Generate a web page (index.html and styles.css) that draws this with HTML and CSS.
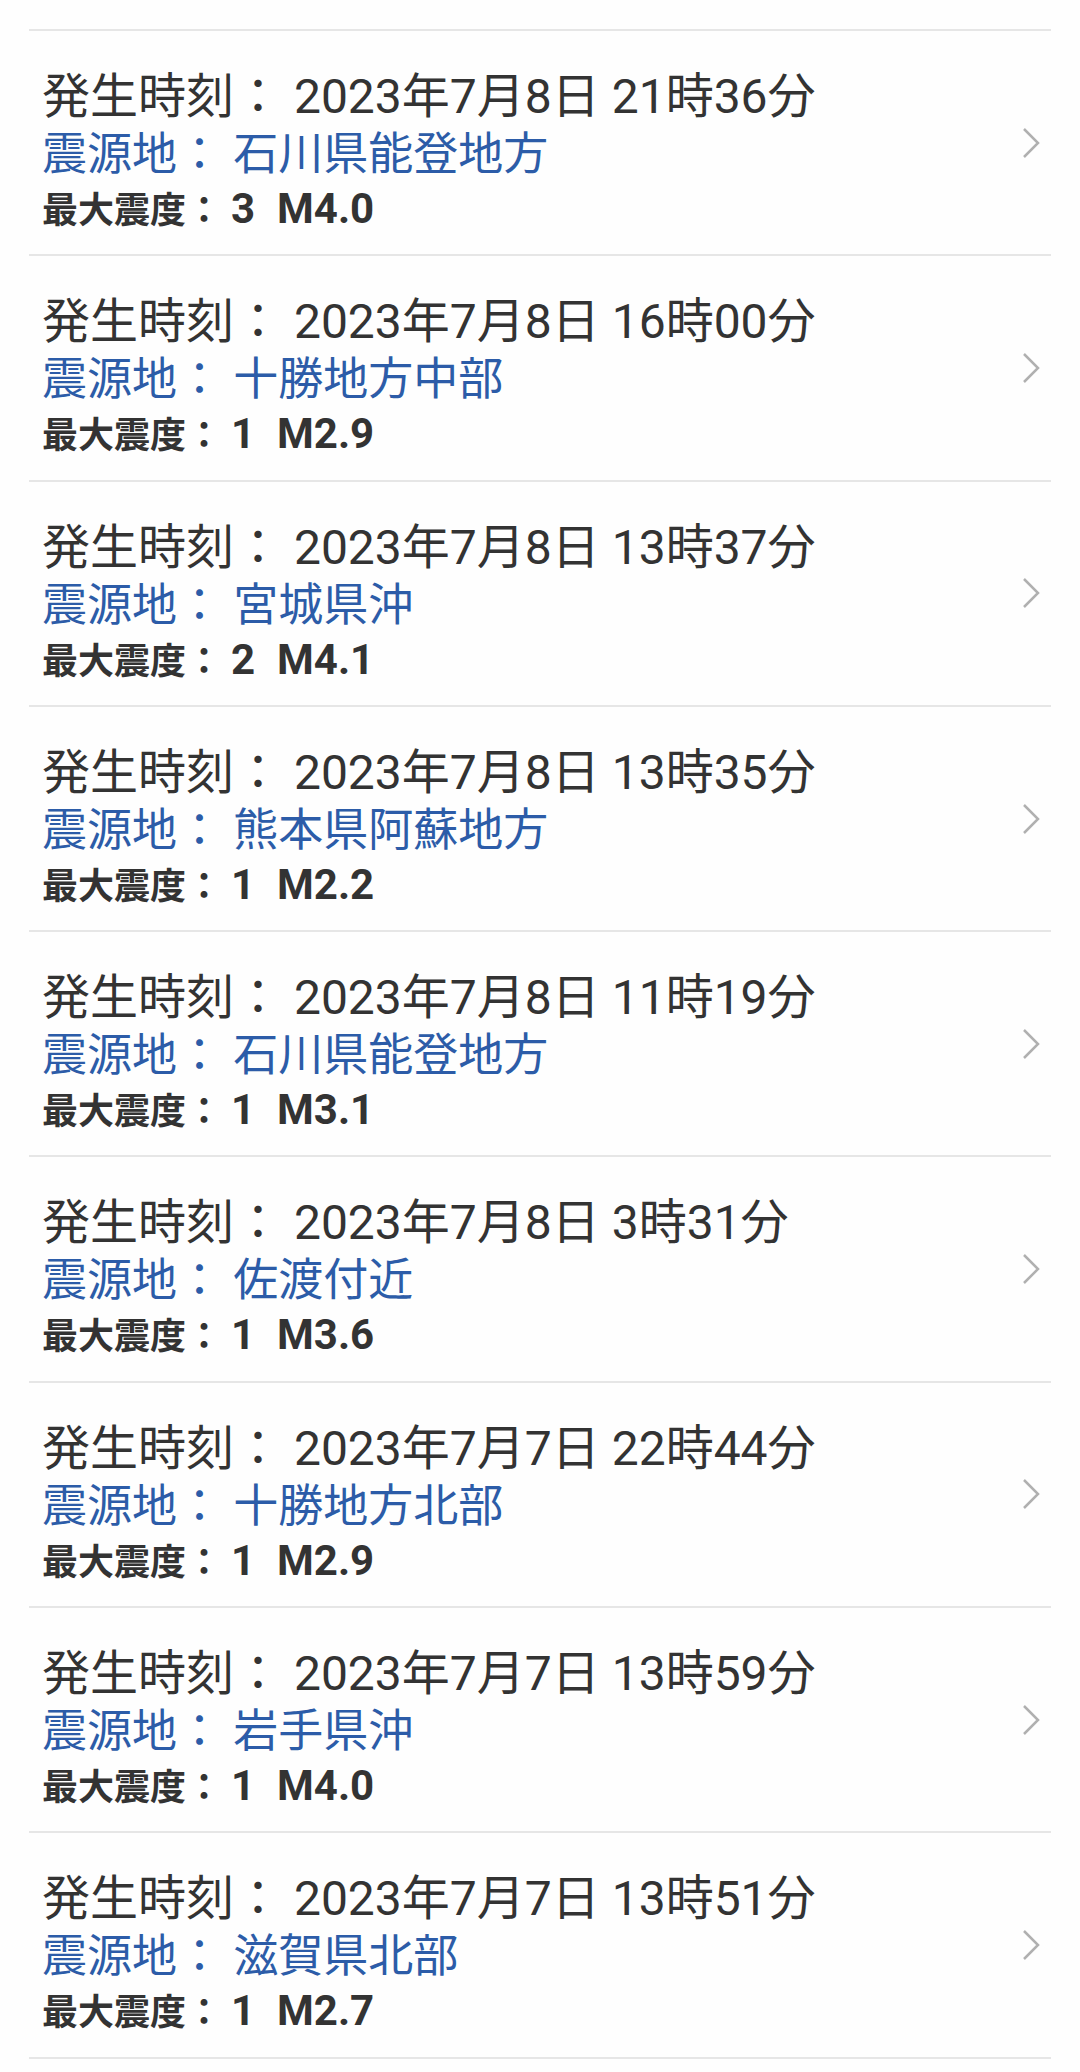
FILE: index.html
```html
<!DOCTYPE html>
<html lang="ja">
<head>
    <meta charset="UTF-8">
    <meta name="viewport" content="width=device-width, initial-scale=1.0">
    <title>地震情報</title>
    <link rel="stylesheet" href="styles.css">
</head>
<body>
    <ul class="quake-list">
        <li class="quake-item">
            <div class="quake-info">
                <div class="quake-time">発生時刻： 2023年7月8日 21時36分</div>
                <div class="quake-place">震源地： 石川県能登地方</div>
                <div class="quake-scale">最大震度： <span class="level">3</span><span class="mag">M4.0</span></div>
            </div>
            <svg class="chevron" viewBox="0 0 20 32"><polyline points="3,2 17,16 3,30"/></svg>
        </li>
        <li class="quake-item">
            <div class="quake-info">
                <div class="quake-time">発生時刻： 2023年7月8日 16時00分</div>
                <div class="quake-place">震源地： 十勝地方中部</div>
                <div class="quake-scale">最大震度： <span class="level">1</span><span class="mag">M2.9</span></div>
            </div>
            <svg class="chevron" viewBox="0 0 20 32"><polyline points="3,2 17,16 3,30"/></svg>
        </li>
        <li class="quake-item">
            <div class="quake-info">
                <div class="quake-time">発生時刻： 2023年7月8日 13時37分</div>
                <div class="quake-place">震源地： 宮城県沖</div>
                <div class="quake-scale">最大震度： <span class="level">2</span><span class="mag">M4.1</span></div>
            </div>
            <svg class="chevron" viewBox="0 0 20 32"><polyline points="3,2 17,16 3,30"/></svg>
        </li>
        <li class="quake-item">
            <div class="quake-info">
                <div class="quake-time">発生時刻： 2023年7月8日 13時35分</div>
                <div class="quake-place">震源地： 熊本県阿蘇地方</div>
                <div class="quake-scale">最大震度： <span class="level">1</span><span class="mag">M2.2</span></div>
            </div>
            <svg class="chevron" viewBox="0 0 20 32"><polyline points="3,2 17,16 3,30"/></svg>
        </li>
        <li class="quake-item">
            <div class="quake-info">
                <div class="quake-time">発生時刻： 2023年7月8日 11時19分</div>
                <div class="quake-place">震源地： 石川県能登地方</div>
                <div class="quake-scale">最大震度： <span class="level">1</span><span class="mag">M3.1</span></div>
            </div>
            <svg class="chevron" viewBox="0 0 20 32"><polyline points="3,2 17,16 3,30"/></svg>
        </li>
        <li class="quake-item">
            <div class="quake-info">
                <div class="quake-time">発生時刻： 2023年7月8日 3時31分</div>
                <div class="quake-place">震源地： 佐渡付近</div>
                <div class="quake-scale">最大震度： <span class="level">1</span><span class="mag">M3.6</span></div>
            </div>
            <svg class="chevron" viewBox="0 0 20 32"><polyline points="3,2 17,16 3,30"/></svg>
        </li>
        <li class="quake-item">
            <div class="quake-info">
                <div class="quake-time">発生時刻： 2023年7月7日 22時44分</div>
                <div class="quake-place">震源地： 十勝地方北部</div>
                <div class="quake-scale">最大震度： <span class="level">1</span><span class="mag">M2.9</span></div>
            </div>
            <svg class="chevron" viewBox="0 0 20 32"><polyline points="3,2 17,16 3,30"/></svg>
        </li>
        <li class="quake-item">
            <div class="quake-info">
                <div class="quake-time">発生時刻： 2023年7月7日 13時59分</div>
                <div class="quake-place">震源地： 岩手県沖</div>
                <div class="quake-scale">最大震度： <span class="level">1</span><span class="mag">M4.0</span></div>
            </div>
            <svg class="chevron" viewBox="0 0 20 32"><polyline points="3,2 17,16 3,30"/></svg>
        </li>
        <li class="quake-item">
            <div class="quake-info">
                <div class="quake-time">発生時刻： 2023年7月7日 13時51分</div>
                <div class="quake-place">震源地： 滋賀県北部</div>
                <div class="quake-scale">最大震度： <span class="level">1</span><span class="mag">M2.7</span></div>
            </div>
            <svg class="chevron" viewBox="0 0 20 32"><polyline points="3,2 17,16 3,30"/></svg>
        </li>
    </ul>
</body>
</html>
```

FILE: styles.css
```css
body {
    margin: 0;
    background: #fefefe;
    font-family: "Roboto", "Noto Sans CJK JP", sans-serif;
    color: #333;
}
.quake-list {
    list-style: none;
    margin: 0 29px;
    padding: 29px 0 0;
}
.quake-item {
    display: flex;
    align-items: center;
    justify-content: space-between;
    border-top: 2px solid #e6e6e6;
    padding: 0 10px 0 13px;
    height: 225.3px;
    box-sizing: border-box;
}
.quake-item:last-child {
    border-bottom: 2px solid #e6e6e6;
    height: 227.3px;
}
.quake-info {
    align-self: flex-start;
    padding-top: 37px;
}
.quake-time {
    font-size: 48px;
    line-height: 58px;
    color: #333;
}
.quake-place {
    font-size: 45px;
    line-height: 58px;
    color: #2c5ca8;
}
.quake-scale {
    font-size: 36px;
    line-height: 50px;
    font-weight: bold;
    color: #333;
}
.quake-scale .level,
.quake-scale .mag {
    font-size: 42px;
}
.quake-scale .mag {
    margin-left: 22px;
}
.chevron {
    width: 20px;
    height: 32px;
    flex-shrink: 0;
}
.chevron polyline {
    fill: none;
    stroke: #b0b0b0;
    stroke-width: 2.5;
}
```
